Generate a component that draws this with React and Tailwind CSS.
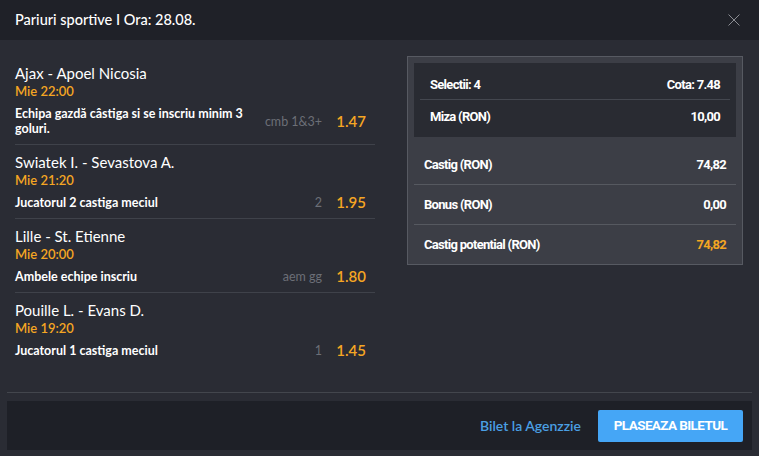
import React from "react";

const bets = [
  { match: "Ajax - Apoel Nicosia", time: "Mie 22:00", pick: "Echipa gazdă câstiga si se inscriu minim 3 goluri.", code: "cmb 1&3+", odd: "1.47" },
  { match: "Swiatek I. - Sevastova A.", time: "Mie 21:20", pick: "Jucatorul 2 castiga meciul", code: "2", odd: "1.95" },
  { match: "Lille - St. Etienne", time: "Mie 20:00", pick: "Ambele echipe inscriu", code: "aem gg", odd: "1.80" },
  { match: "Pouille L. - Evans D.", time: "Mie 19:20", pick: "Jucatorul 1 castiga meciul", code: "1", odd: "1.45" },
];

const narrow = { fontFamily: '"Liberation Sans Narrow", Roboto, sans-serif' };

function BetRow({ bet, last }) {
  return (
    <div className={`py-[8px] ${last ? "" : "border-b border-[#3f424a]"}`}>
      <div className="text-[15px] leading-[18px] text-white">{bet.match}</div>
      <div className="text-[13px] font-semibold leading-[18px] text-[#f5a623]">{bet.time}</div>
      <div className="mt-[6px] flex items-center">
        <div className="w-[245px] text-[12.5px] font-bold leading-[15px] text-white">{bet.pick}</div>
        <div className="flex-1 text-right text-[12.5px] leading-[15px] text-[#6c6f77]">{bet.code}</div>
        <div className="w-[53px] pr-[9px] text-right text-[15px] font-semibold leading-[15px] text-[#f5a623]">{bet.odd}</div>
      </div>
    </div>
  );
}

function SumRow({ label, value, accent, border }) {
  return (
    <div className={`flex h-[40px] items-center justify-between px-[10px] text-[13px] font-bold tracking-[-0.7px] text-white ${border ? "border-b border-[#565960]" : ""}`} style={narrow}>
      <span>{label}</span>
      <span className={accent ? "text-[#f5a623]" : ""}>{value}</span>
    </div>
  );
}

export default function App() {
  return (
    <div className="flex h-[456px] w-[759px] flex-col bg-[#2a2c34]" style={{ fontFamily: "Lato, 'Liberation Sans', sans-serif" }}>
      <div className="flex h-[40px] items-center justify-between bg-[#1f2128] pl-[15px] pr-[19px]">
        <span className="text-[14.5px] font-medium text-white">Pariuri sportive I Ora: 28.08.</span>
        <svg width="12" height="12" viewBox="0 0 12 12" className="text-[#8b8d93]">
          <path d="M0.5 0.5 L11.5 11.5 M11.5 0.5 L0.5 11.5" stroke="currentColor" strokeWidth="1" />
        </svg>
      </div>

      <div className="flex flex-1 pl-[15px] pr-[16px] pt-[16px]">
        <div className="w-[360px]">
          {bets.map((b, i) => (
            <BetRow key={i} bet={b} last={i === bets.length - 1} />
          ))}
        </div>
        <div className="ml-auto h-[209px] w-[336px] border border-[#575a62] bg-[#3c3e46] px-[6px] pt-[6px]">
          <div className="bg-[#292b32] px-[6px] pt-[8px] pb-[3px] text-[13px] font-bold tracking-[-0.7px] text-white" style={narrow}>
            <div className="flex h-[29px] items-center justify-between border-b border-[#44474f] px-[10px]">
              <span>Selectii: 4</span>
              <span>Cota: 7.48</span>
            </div>
            <div className="flex h-[34px] items-center justify-between px-[10px]">
              <span>Miza (RON)</span>
              <span>10,00</span>
            </div>
          </div>
          <div className="mt-[8px]">
            <SumRow label="Castig (RON)" value="74,82" border />
            <SumRow label="Bonus (RON)" value="0,00" border />
            <SumRow label="Castig potential (RON)" value="74,82" accent />
          </div>
        </div>
      </div>

      <div className="mx-[7px] mb-[6px]">
        <div className="h-px bg-[#43464d]" />
        <div className="mt-[8px] flex h-[49px] items-center justify-end bg-[#1e2027] pr-[9px]">
          <span className="mr-[17px] text-[14px] font-semibold text-[#4a9fe3]">Bilet la Agenzzie</span>
          <button className="h-[32px] w-[145px] rounded-[2px] bg-[#45a6f6] text-[13.5px] font-bold tracking-[-0.6px] text-white" style={narrow}>
            PLASEAZA BILETUL
          </button>
        </div>
      </div>
    </div>
  );
}
